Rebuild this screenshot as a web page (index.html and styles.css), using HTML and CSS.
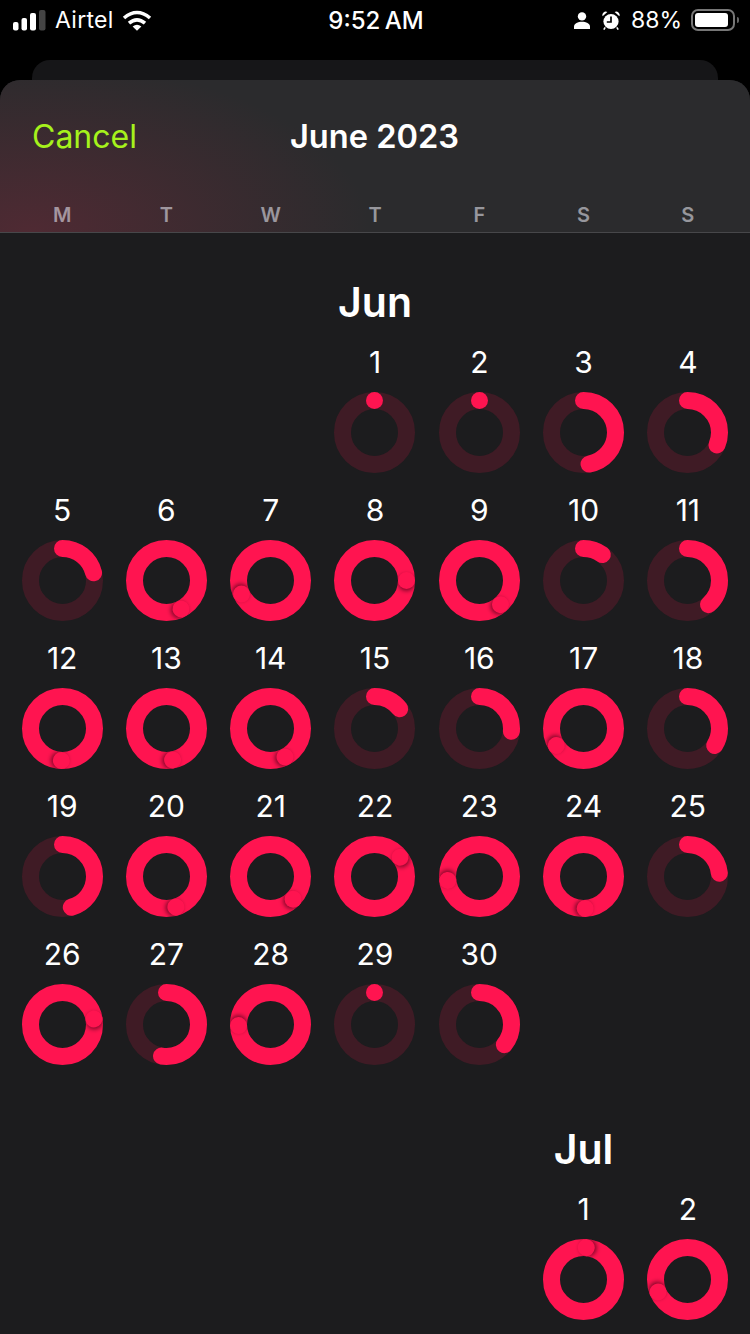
FILE: index.html
```html
<!DOCTYPE html>
<html>
<head lang="en">
  <meta charset="UTF-8">
  <title>June 2023</title>
  <link rel="stylesheet" href="styles.css">
</head>
<body>

<!-- status bar -->
<div class="status">
  <div class="status-left">
    <svg class="signal" width="33" height="21" viewBox="0 0 33 21">
      <rect x="0" y="12" width="5.5" height="8.5" rx="2" fill="#fff"/>
      <rect x="8.5" y="8" width="5.5" height="12.5" rx="2" fill="#fff"/>
      <rect x="17" y="3" width="6" height="17.5" rx="2" fill="#fff"/>
      <rect x="26" y="0" width="6.5" height="20.5" rx="2" fill="#444"/>
    </svg>
    <span class="carrier">Airtel</span>
    <svg class="wifi" width="30" height="21" viewBox="0 0 30 21">
      <path d="M2 8Q15 -3 28 8M7 13.2Q15 6.4 23 13.2" fill="none" stroke="#fff" stroke-width="3.6"/>
      <path d="M10.6 16.4Q15 13 19.4 16.4L15 20.8Z" fill="#fff"/>
    </svg>
  </div>
  <div class="status-time">9:52 AM</div>
  <div class="status-right">
    <svg class="person" width="16" height="17" viewBox="0 0 16 17">
      <circle cx="8" cy="4.4" r="4.2" fill="#fff"/>
      <path d="M0 17V14.6C0 11.4 4 9.8 8 9.8S16 11.4 16 14.6V17Z" fill="#fff"/>
    </svg>
    <svg class="alarm" width="18" height="19" viewBox="0 0 18 19">
      <circle cx="9" cy="10.5" r="7.6" fill="#fff"/>
      <path d="M0.6 5.2A3.4 3.4 0 0 1 5.4 1ZM17.4 5.2A3.4 3.4 0 0 0 12.6 1Z" fill="#fff"/>
      <path d="M3.2 16.4L1.8 18.6M14.8 16.4L16.2 18.6" stroke="#fff" stroke-width="1.6"/>
      <path d="M9 5.4V11H4.8" fill="none" stroke="#000" stroke-width="1.7"/>
    </svg>
    <span class="percent">88%</span>
    <div class="battery"><div class="battery-fill"></div></div>
    <div class="battery-nub"></div>
  </div>
</div>

<!-- card peeking out behind the sheet -->
<div class="peek"></div>

<div class="sheet">
  <div class="sheet-head">
    <div class="nav">
      <span class="cancel">Cancel</span>
      <span class="nav-title">June 2023</span>
    </div>
    <div class="weekdays">
      <span>M</span><span>T</span><span>W</span><span>T</span><span>F</span><span>S</span><span>S</span>
    </div>
  </div>

  <div class="months">
    <svg class="sprites" width="0" height="0">
      <defs>
        <clipPath id="ring-clip">
          <path clip-rule="evenodd" d="M40.5 0a40.5 40.5 0 1 0 .01 0ZM40.5 17a23.5 23.5 0 1 0 .01 0Z"/>
        </clipPath>
        <!-- end of a ring that went past 100%, it throws a shadow on the lap below -->
        <g id="lap">
          <g clip-path="url(#ring-clip)"><circle class="lap-shade" cx="42.5" cy="8.5" r="8.5"/></g>
          <circle class="lap-cap" cx="40.5" cy="8.5" r="8.5"/>
        </g>
      </defs>
    </svg>

    <div class="month">
      <h2 class="month-title col-4">Jun</h2>

      <div class="day col-4"><span>1</span><svg class="ring" viewBox="0 0 81 81"><circle class="track"/><circle class="arc" pathLength="360" stroke-dasharray="0 360"/></svg></div>
      <div class="day"><span>2</span><svg class="ring" viewBox="0 0 81 81"><circle class="track"/><circle class="arc" pathLength="360" stroke-dasharray="0 360"/></svg></div>
      <div class="day"><span>3</span><svg class="ring" viewBox="0 0 81 81"><circle class="track"/><circle class="arc" pathLength="360" stroke-dasharray="170 360"/></svg></div>
      <div class="day"><span>4</span><svg class="ring" viewBox="0 0 81 81"><circle class="track"/><circle class="arc" pathLength="360" stroke-dasharray="113 360"/></svg></div>

      <div class="day"><span>5</span><svg class="ring" viewBox="0 0 81 81"><circle class="track"/><circle class="arc" pathLength="360" stroke-dasharray="76 360"/></svg></div>
      <div class="day"><span>6</span><svg class="ring" viewBox="0 0 81 81"><circle class="full"/><use href="#lap" transform="rotate(153 40.5 40.5)"/></svg></div>
      <div class="day"><span>7</span><svg class="ring" viewBox="0 0 81 81"><circle class="full"/><use href="#lap" transform="rotate(245 40.5 40.5)"/></svg></div>
      <div class="day"><span>8</span><svg class="ring" viewBox="0 0 81 81"><circle class="full"/><use href="#lap" transform="rotate(90 40.5 40.5)"/></svg></div>
      <div class="day"><span>9</span><svg class="ring" viewBox="0 0 81 81"><circle class="full"/><use href="#lap" transform="rotate(139 40.5 40.5)"/></svg></div>
      <div class="day"><span>10</span><svg class="ring" viewBox="0 0 81 81"><circle class="track"/><circle class="arc" pathLength="360" stroke-dasharray="36 360"/></svg></div>
      <div class="day"><span>11</span><svg class="ring" viewBox="0 0 81 81"><circle class="track"/><circle class="arc" pathLength="360" stroke-dasharray="139 360"/></svg></div>

      <div class="day"><span>12</span><svg class="ring" viewBox="0 0 81 81"><circle class="full"/><use href="#lap" transform="rotate(182 40.5 40.5)"/></svg></div>
      <div class="day"><span>13</span><svg class="ring" viewBox="0 0 81 81"><circle class="full"/><use href="#lap" transform="rotate(169 40.5 40.5)"/></svg></div>
      <div class="day"><span>14</span><svg class="ring" viewBox="0 0 81 81"><circle class="full"/><use href="#lap" transform="rotate(153 40.5 40.5)"/></svg></div>
      <div class="day"><span>15</span><svg class="ring" viewBox="0 0 81 81"><circle class="track"/><circle class="arc" pathLength="360" stroke-dasharray="52 360"/></svg></div>
      <div class="day"><span>16</span><svg class="ring" viewBox="0 0 81 81"><circle class="track"/><circle class="arc" pathLength="360" stroke-dasharray="95 360"/></svg></div>
      <div class="day"><span>17</span><svg class="ring" viewBox="0 0 81 81"><circle class="full"/><use href="#lap" transform="rotate(238 40.5 40.5)"/></svg></div>
      <div class="day"><span>18</span><svg class="ring" viewBox="0 0 81 81"><circle class="track"/><circle class="arc" pathLength="360" stroke-dasharray="122 360"/></svg></div>

      <div class="day"><span>19</span><svg class="ring" viewBox="0 0 81 81"><circle class="track"/><circle class="arc" pathLength="360" stroke-dasharray="164 360"/></svg></div>
      <div class="day"><span>20</span><svg class="ring" viewBox="0 0 81 81"><circle class="full"/><use href="#lap" transform="rotate(163 40.5 40.5)"/></svg></div>
      <div class="day"><span>21</span><svg class="ring" viewBox="0 0 81 81"><circle class="full"/><use href="#lap" transform="rotate(135 40.5 40.5)"/></svg></div>
      <div class="day"><span>22</span><svg class="ring" viewBox="0 0 81 81"><circle class="full"/><use href="#lap" transform="rotate(53 40.5 40.5)"/></svg></div>
      <div class="day"><span>23</span><svg class="ring" viewBox="0 0 81 81"><circle class="full"/><use href="#lap" transform="rotate(263 40.5 40.5)"/></svg></div>
      <div class="day"><span>24</span><svg class="ring" viewBox="0 0 81 81"><circle class="full"/><use href="#lap" transform="rotate(177 40.5 40.5)"/></svg></div>
      <div class="day"><span>25</span><svg class="ring" viewBox="0 0 81 81"><circle class="track"/><circle class="arc" pathLength="360" stroke-dasharray="84 360"/></svg></div>

      <div class="day"><span>26</span><svg class="ring" viewBox="0 0 81 81"><circle class="full"/><use href="#lap" transform="rotate(80 40.5 40.5)"/></svg></div>
      <div class="day"><span>27</span><svg class="ring" viewBox="0 0 81 81"><circle class="track"/><circle class="arc" pathLength="360" stroke-dasharray="189 360"/></svg></div>
      <div class="day"><span>28</span><svg class="ring" viewBox="0 0 81 81"><circle class="full"/><use href="#lap" transform="rotate(268 40.5 40.5)"/></svg></div>
      <div class="day"><span>29</span><svg class="ring" viewBox="0 0 81 81"><circle class="track"/><circle class="arc" pathLength="360" stroke-dasharray="0 360"/></svg></div>
      <div class="day"><span>30</span><svg class="ring" viewBox="0 0 81 81"><circle class="track"/><circle class="arc" pathLength="360" stroke-dasharray="129 360"/></svg></div>
    </div>

    <div class="month">
      <h2 class="month-title col-6">Jul</h2>

      <div class="day col-6"><span>1</span><svg class="ring" viewBox="0 0 81 81"><circle class="full"/><use href="#lap" transform="rotate(5 40.5 40.5)"/></svg></div>
      <div class="day"><span>2</span><svg class="ring" viewBox="0 0 81 81"><circle class="full"/><use href="#lap" transform="rotate(247 40.5 40.5)"/></svg></div>
    </div>
  </div>
</div>

</body>
</html>
```

FILE: styles.css
```css
* {
  margin: 0;
  padding: 0;
  box-sizing: border-box;
}

html, body {
  width: 750px;
  height: 1334px;
  overflow: hidden;
}

body {
  background: #000;
  color: #fff;
  font-family: Inter, "Liberation Sans", sans-serif;
}

/* status bar */
.status {
  height: 60px;
  padding: 0 11px 20px 13px;
  display: grid;
  grid-template-columns: 1fr auto 1fr;
  align-items: center;
  font-size: 22px;
}

.status-left, .status-right {
  display: flex;
  align-items: center;
}

.status-right {
  justify-content: flex-end;
}

.carrier {
  margin-left: 9px;
  font-size: 23px;
  letter-spacing: .3px;
}

.wifi {
  margin-left: 8px;
}

.status-time {
  font-size: 24px;
  font-weight: 500;
  word-spacing: -2px;
}

.alarm {
  margin-left: 12px;
}

.percent {
  margin-left: 11px;
  font-size: 23px;
}

.battery {
  width: 44px;
  height: 22px;
  margin-left: 9px;
  padding: 2px;
  border: 2px solid #777;
  border-radius: 7px;
}

.battery-fill {
  width: 33px;
  height: 14px;
  background: #fff;
  border-radius: 3px;
}

.battery-nub {
  width: 2px;
  height: 6px;
  margin-left: 2px;
  background: #666;
  border-radius: 0 2px 2px 0;
}

.peek {
  height: 20px;
  margin: 0 32px;
  background: #161618;
  border-radius: 18px 18px 0 0;
}

/* sheet */
.sheet {
  height: 1254px;
  background: #1c1c1e;
  border-radius: 20px 20px 0 0;
  overflow: hidden;
}

.sheet-head {
  height: 153px;
  border-bottom: 1px solid #47474a;
  background: radial-gradient(ellipse 340px 170px at 30px 100%, #4f2a33, rgba(79, 42, 51, 0)), #2b2b2d;
}

.nav {
  height: 112px;
  padding: 0 33px 0 32px;
  display: grid;
  grid-template-columns: 1fr auto 1fr;
  align-items: center;
}

.cancel {
  font-size: 32px;
  color: #a6f21c;
}

.nav-title {
  font-size: 32.6px;
  font-weight: 600;
}

.weekdays {
  height: 40px;
  padding: 6px 10px 0;
  display: grid;
  grid-template-columns: repeat(7, 1fr);
  align-items: center;
  text-align: center;
  font-size: 20px;
  font-weight: 600;
  color: rgba(235, 235, 245, .56);
}

/* calendar */
.months {
  padding: 45px 10px 0;
}

.sprites {
  position: absolute;
}

.month {
  display: grid;
  grid-template-columns: repeat(7, 1fr);
  row-gap: 21px;
  margin-bottom: 60px;
}

.month-title {
  height: 47px;
  line-height: 48px;
  text-align: center;
  font-size: 41px;
  font-weight: 600;
}

.col-4 {
  grid-column-start: 4;
}

.col-6 {
  grid-column-start: 6;
}

.day {
  display: flex;
  flex-direction: column;
  align-items: center;
  gap: 12px;
  font-size: 30px;
}

.day span {
  height: 34px;
  line-height: 33px;
}

.ring {
  display: block;
  width: 81px;
  height: 81px;
}

.ring circle {
  cx: 40.5px;
  cy: 40.5px;
  r: 32px;
  fill: none;
  stroke-width: 17px;
}

.ring .track {
  stroke: #3f1b25;
}

.ring .full {
  stroke: #ff1450;
}

.ring .arc {
  stroke: #ff1450;
  stroke-linecap: round;
  transform: rotate(-90deg);
  transform-origin: 40.5px 40.5px;
}

.lap-shade {
  fill: rgba(60, 0, 20, .65);
  filter: blur(2px);
}

.lap-cap {
  fill: #ff1450;
}
```
